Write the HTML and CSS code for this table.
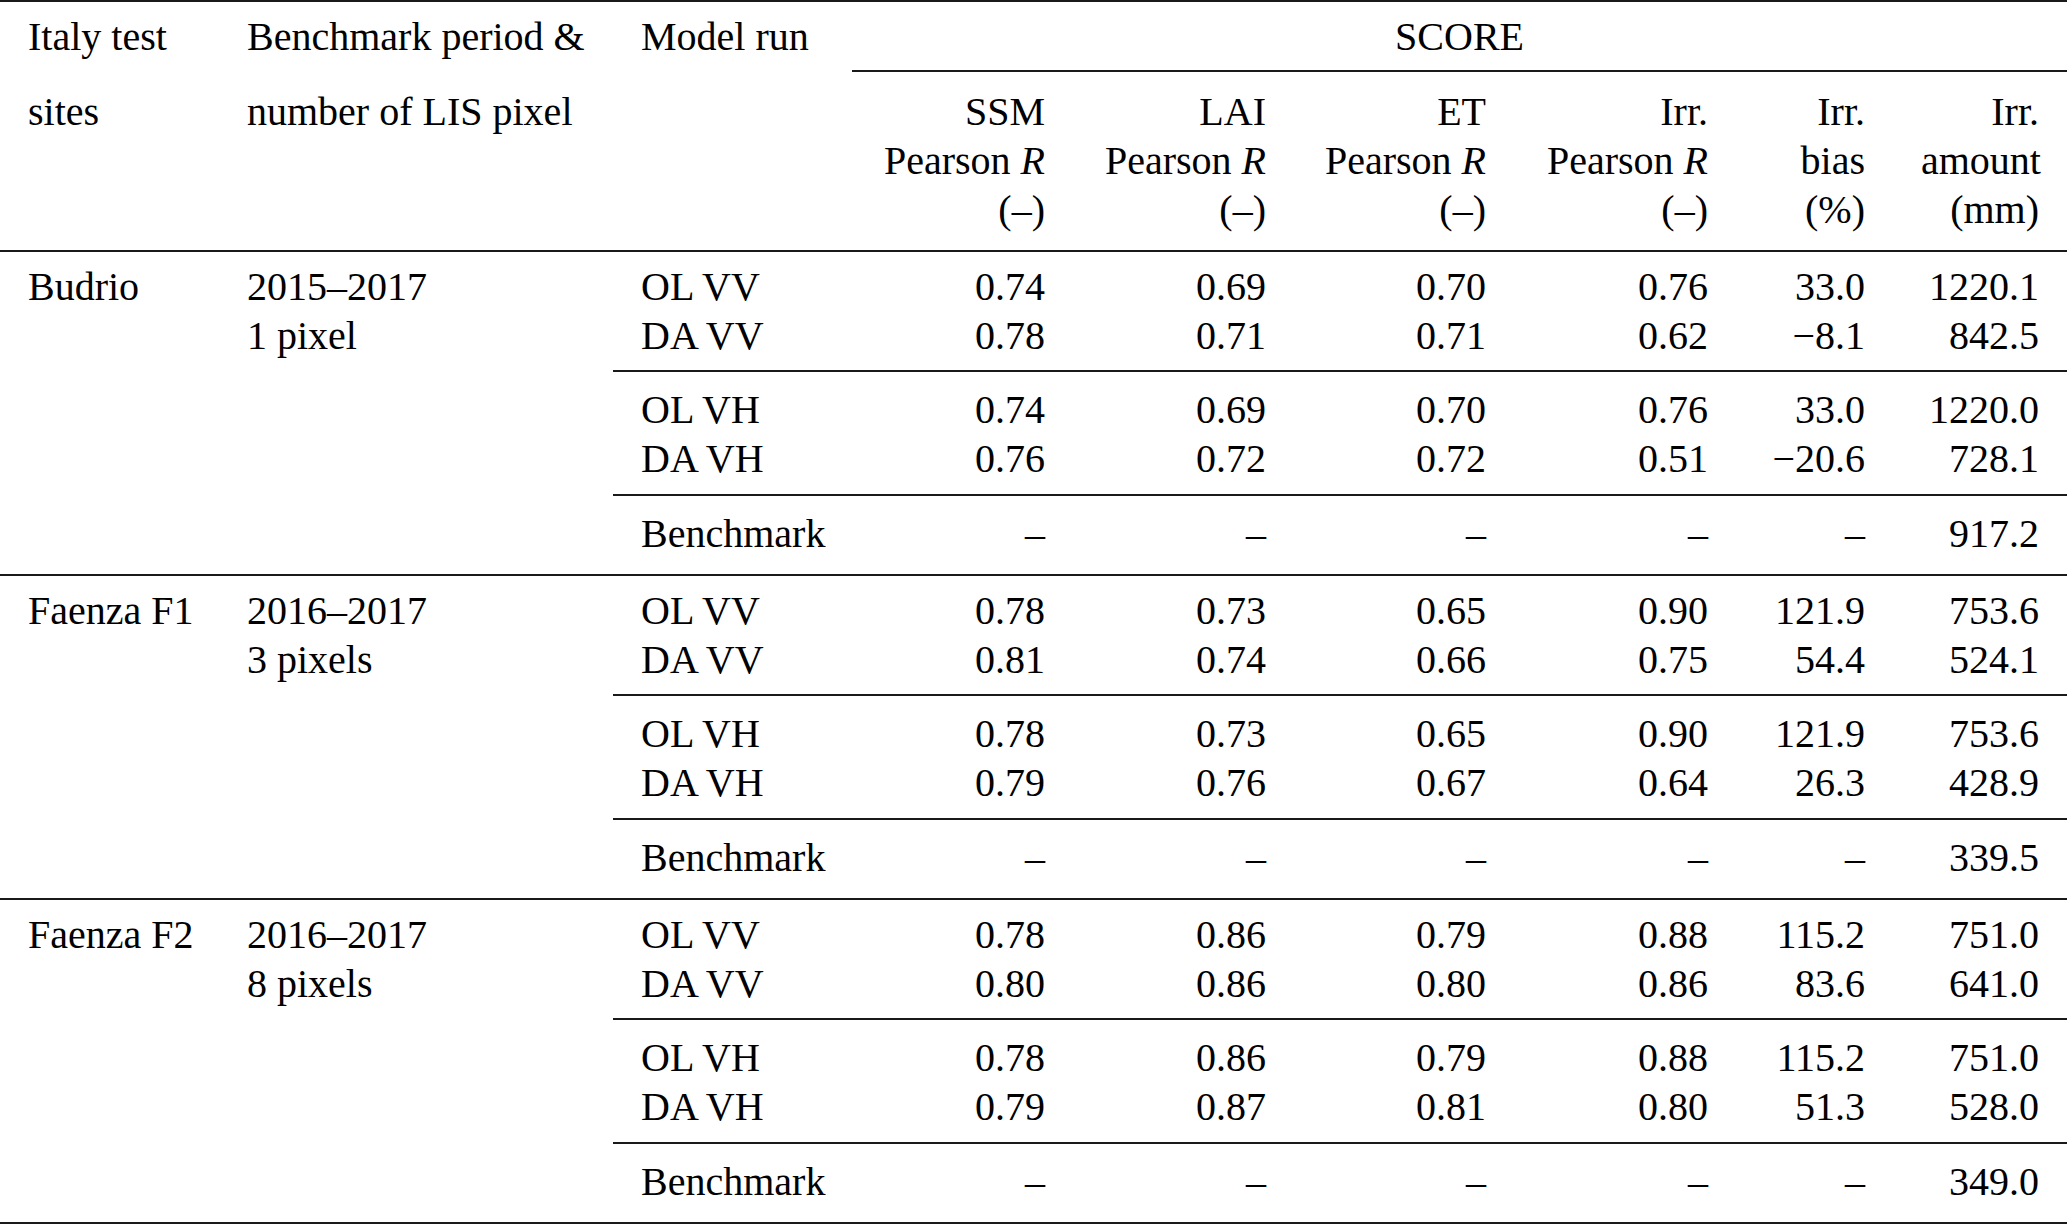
FILE: index.html
```html
<!DOCTYPE html>
<html lang="en">
<head>
<meta charset="utf-8">
<title>Italy test sites scores</title>
<link rel="stylesheet" href="styles.css">
</head>
<body>
<div class="wrap">
<table class="tbl">
  <colgroup>
    <col class="c1"><col class="c2"><col class="c3"><col class="c4"><col class="c5"><col class="c6"><col class="c7"><col class="c8"><col class="c9">
  </colgroup>
  <thead>
    <tr class="h1">
      <th>Italy test</th>
      <th>Benchmark period &amp;</th>
      <th>Model run</th>
      <th colspan="6" class="score">SCORE</th>
    </tr>
    <tr class="h2">
      <th class="blank">sites</th>
      <th class="blank">number of LIS pixel</th>
      <th class="blank"></th>
      <th class="num">SSM<br>Pearson <i>R</i><br>(–)</th>
      <th class="num">LAI<br>Pearson <i>R</i><br>(–)</th>
      <th class="num">ET<br>Pearson <i>R</i><br>(–)</th>
      <th class="num">Irr.<br>Pearson <i>R</i><br>(–)</th>
      <th class="num">Irr.<br>bias<br>(%)</th>
      <th class="num">Irr.<br>amount<br>(mm)</th>
    </tr>
  </thead>
  <tbody>
    <tr class="start">
      <td rowspan="5">Budrio</td>
      <td rowspan="5">2015–2017<br>1 pixel</td>
      <td>OL VV</td><td class="num">0.74</td><td class="num">0.69</td><td class="num">0.70</td><td class="num">0.76</td><td class="num">33.0</td><td class="num">1220.1</td>
    </tr>
    <tr class="r2">
      <td>DA VV</td><td class="num">0.78</td><td class="num">0.71</td><td class="num">0.71</td><td class="num">0.62</td><td class="num">−8.1</td><td class="num">842.5</td>
    </tr>
    <tr class="r3">
      <td>OL VH</td><td class="num">0.74</td><td class="num">0.69</td><td class="num">0.70</td><td class="num">0.76</td><td class="num">33.0</td><td class="num">1220.0</td>
    </tr>
    <tr class="r4">
      <td>DA VH</td><td class="num">0.76</td><td class="num">0.72</td><td class="num">0.72</td><td class="num">0.51</td><td class="num">−20.6</td><td class="num">728.1</td>
    </tr>
    <tr class="r5">
      <td>Benchmark</td><td class="num">–</td><td class="num">–</td><td class="num">–</td><td class="num">–</td><td class="num">–</td><td class="num">917.2</td>
    </tr>

    <tr class="start">
      <td rowspan="5">Faenza F1</td>
      <td rowspan="5">2016–2017<br>3 pixels</td>
      <td>OL VV</td><td class="num">0.78</td><td class="num">0.73</td><td class="num">0.65</td><td class="num">0.90</td><td class="num">121.9</td><td class="num">753.6</td>
    </tr>
    <tr class="r2">
      <td>DA VV</td><td class="num">0.81</td><td class="num">0.74</td><td class="num">0.66</td><td class="num">0.75</td><td class="num">54.4</td><td class="num">524.1</td>
    </tr>
    <tr class="r3">
      <td>OL VH</td><td class="num">0.78</td><td class="num">0.73</td><td class="num">0.65</td><td class="num">0.90</td><td class="num">121.9</td><td class="num">753.6</td>
    </tr>
    <tr class="r4">
      <td>DA VH</td><td class="num">0.79</td><td class="num">0.76</td><td class="num">0.67</td><td class="num">0.64</td><td class="num">26.3</td><td class="num">428.9</td>
    </tr>
    <tr class="r5">
      <td>Benchmark</td><td class="num">–</td><td class="num">–</td><td class="num">–</td><td class="num">–</td><td class="num">–</td><td class="num">339.5</td>
    </tr>

    <tr class="start">
      <td rowspan="5">Faenza F2</td>
      <td rowspan="5">2016–2017<br>8 pixels</td>
      <td>OL VV</td><td class="num">0.78</td><td class="num">0.86</td><td class="num">0.79</td><td class="num">0.88</td><td class="num">115.2</td><td class="num">751.0</td>
    </tr>
    <tr class="r2">
      <td>DA VV</td><td class="num">0.80</td><td class="num">0.86</td><td class="num">0.80</td><td class="num">0.86</td><td class="num">83.6</td><td class="num">641.0</td>
    </tr>
    <tr class="r3">
      <td>OL VH</td><td class="num">0.78</td><td class="num">0.86</td><td class="num">0.79</td><td class="num">0.88</td><td class="num">115.2</td><td class="num">751.0</td>
    </tr>
    <tr class="r4">
      <td>DA VH</td><td class="num">0.79</td><td class="num">0.87</td><td class="num">0.81</td><td class="num">0.80</td><td class="num">51.3</td><td class="num">528.0</td>
    </tr>
    <tr class="r5">
      <td>Benchmark</td><td class="num">–</td><td class="num">–</td><td class="num">–</td><td class="num">–</td><td class="num">–</td><td class="num">349.0</td>
    </tr>
  </tbody>
</table>
</div>
</body>
</html>
```

FILE: styles.css
```css
html, body {
  margin: 0;
  padding: 0;
  background: #ffffff;
}

body {
  font-family: "Liberation Serif", "Times New Roman", serif;
  font-size: 40px;
  color: #000000;
}

.wrap {
  width: 2067px;
  border-top: 2px solid #1a1a1a;
  border-bottom: 2px solid #1a1a1a;
}

.tbl {
  width: 2067px;
  table-layout: fixed;
  border-collapse: separate;
  border-spacing: 0;
  line-height: 49px;
}

.c1 { width: 219px; }
.c2 { width: 394px; }
.c3 { width: 239px; }
.c4 { width: 221px; }
.c5 { width: 221px; }
.c6 { width: 220px; }
.c7 { width: 222px; }
.c8 { width: 157px; }
.c9 { width: 174px; }

.tbl th,
.tbl td {
  padding: 0 28px;
  white-space: nowrap;
  vertical-align: top;
  text-align: left;
  font-weight: normal;
}

.tbl .num {
  text-align: right;
}

.tbl .score {
  text-align: center;
}

.tbl i {
  font-style: italic;
}

/* header rows */
.h1 th {
  padding-top: 10px;
  padding-bottom: 9px;
}

.h2 th {
  border-top: 2px solid #1a1a1a;
  padding-top: 15px;
  padding-bottom: 16px;
}

.h2 th.blank {
  border-top-color: transparent;
}

/* body block rows */
.start td {
  border-top: 2px solid #1a1a1a;
  padding-top: 10px;
}

.r2 td {
  padding-bottom: 10px;
}

.r3 td {
  border-top: 2px solid #1a1a1a;
  padding-top: 13px;
}

.r4 td {
  padding-bottom: 11px;
}

.r5 td {
  border-top: 2px solid #1a1a1a;
  padding-top: 13px;
  padding-bottom: 16px;
}
```
